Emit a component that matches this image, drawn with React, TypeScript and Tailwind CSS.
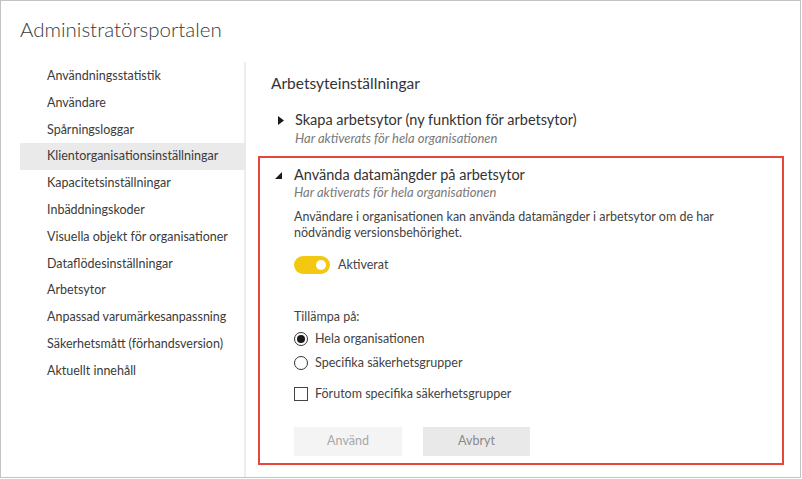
import React, { useState } from 'react';

const navItems = [
  'Användningsstatistik',
  'Användare',
  'Spårningsloggar',
  'Klientorganisationsinställningar',
  'Kapacitetsinställningar',
  'Inbäddningskoder',
  'Visuella objekt för organisationer',
  'Dataflödesinställningar',
  'Arbetsytor',
  'Anpassad varumärkesanpassning',
  'Säkerhetsmått (förhandsversion)',
  'Aktuellt innehåll',
];

const CaretRight = () => (
  <svg width="6" height="9" viewBox="0 0 6 9" className="shrink-0">
    <path d="M0 0 L6 4.5 L0 9 Z" fill="#1a1a1a" />
  </svg>
);

const CaretExpanded = () => (
  <svg width="7" height="7" viewBox="0 0 7 7" className="shrink-0">
    <path d="M7 0 L7 7 L0 7 Z" fill="#1a1a1a" />
  </svg>
);

const App: React.FC = () => {
  const [enabled, setEnabled] = useState<boolean>(true);
  const [scope, setScope] = useState<'all' | 'groups'>('all');
  const [except, setExcept] = useState<boolean>(false);

  return (
    <div className="w-[802px] h-[479px] bg-white" style={{ fontFamily: 'Lato, "Open Sans", sans-serif' }}>
      <div className="w-[801px] h-[478px] border border-[#c3c3c3] flex flex-col text-[#333]">
        <h1 className="pl-[19px] pt-[13px] h-[61px] text-[20.5px] leading-[30px] font-light text-[#3a3a3a]">
          Administratörsportalen
        </h1>

        <div className="flex flex-1 min-h-0">
          {/* sidebar */}
          <nav className="ml-[19px] w-[226px] pt-[1px] border-r-2 border-[#ededed] flex flex-col">
            {navItems.map((item, i) => (
              <div
                key={item}
                className={`h-[26.8px] shrink-0 flex items-center pl-[27px] text-[12.5px] text-[#3b3b3b] whitespace-nowrap ${
                  i === 3 ? 'bg-[#eaeaea] mr-[-2px]' : ''
                }`}
              >
                {item}
              </div>
            ))}
          </nav>

          {/* content */}
          <main className="flex-1 pl-[12px] pt-[10px]">
            <h2 className="pl-[13px] text-[15.5px] leading-[22px] text-[#333]">Arbetsyteinställningar</h2>

            <div className="mt-[16px] pl-[20px] flex items-center gap-[11px]">
              <CaretRight />
              <span className="text-[14.5px] leading-[20px] text-[#333]">Skapa arbetsytor (ny funktion för arbetsytor)</span>
            </div>
            <div className="pl-[37px] text-[13px] leading-[17px] italic text-[#7a7a7a]">
              Har aktiverats för hela organisationen
            </div>

            <section className="mt-[9px] w-[526px] h-[309px] border-2 border-[#e8453c] pl-[15px] pt-[7px]">
              <div className="flex items-center gap-[12px]">
                <CaretExpanded />
                <span className="text-[14.5px] leading-[20px] text-[#333]">Använda datamängder på arbetsytor</span>
              </div>
              <div className="pl-[19px] text-[13px] leading-[15px] italic text-[#7a7a7a]">
                Har aktiverats för hela organisationen
              </div>

              <div className="pl-[19px] pt-[9px]">
                <p className="text-[12.5px] leading-[16px] text-[#444]">
                  Användare i organisationen kan använda datamängder i arbetsytor om de har
                  <br />
                  nödvändig versionsbehörighet.
                </p>

                <button
                  onClick={() => setEnabled(!enabled)}
                  className="mt-[15px] h-[18px] flex items-center gap-[8px]"
                >
                  <span
                    className={`w-[36px] h-[18px] rounded-full flex items-center px-[4px] ${
                      enabled ? 'bg-[#f2c811] justify-end' : 'bg-[#c8c8c8] justify-start'
                    }`}
                  >
                    <span className="w-[10px] h-[10px] rounded-full bg-white" />
                  </span>
                  <span className="text-[12.5px] text-[#444]">Aktiverat</span>
                </button>

                <div className="mt-[34px] text-[12.5px] leading-[18px] text-[#444]">Tillämpa på:</div>

                <label className="mt-[4px] flex items-center gap-[7px] text-[12.5px] leading-[18px] text-[#444]" onClick={() => setScope('all')}>
                  <span className="w-[14px] h-[14px] rounded-full border border-[#333] flex items-center justify-center">
                    {scope === 'all' && <span className="w-[8px] h-[8px] rounded-full bg-[#1a1a1a]" />}
                  </span>
                  Hela organisationen
                </label>
                <label className="mt-[6px] flex items-center gap-[7px] text-[12.5px] leading-[18px] text-[#444]" onClick={() => setScope('groups')}>
                  <span className="w-[14px] h-[14px] rounded-full border border-[#333] flex items-center justify-center">
                    {scope === 'groups' && <span className="w-[8px] h-[8px] rounded-full bg-[#1a1a1a]" />}
                  </span>
                  Specifika säkerhetsgrupper
                </label>

                <label className="mt-[13px] flex items-center gap-[7px] text-[12.5px] leading-[18px] text-[#444]" onClick={() => setExcept(!except)}>
                  <span className="w-[14px] h-[14px] border border-[#444] flex items-center justify-center text-[10px]">
                    {except ? '✓' : ''}
                  </span>
                  Förutom specifika säkerhetsgrupper
                </label>

                <div className="mt-[24px] flex gap-[21px]">
                  <button disabled className="w-[108px] h-[29px] bg-[#f4f4f4] text-[12.5px] text-[#a8a8a8]">
                    Använd
                  </button>
                  <button className="w-[107px] h-[29px] bg-[#e9e9e9] text-[12.5px] text-[#8a8a8a]">
                    Avbryt
                  </button>
                </div>
              </div>
            </section>
          </main>
        </div>
      </div>
    </div>
  );
};

export default App;
